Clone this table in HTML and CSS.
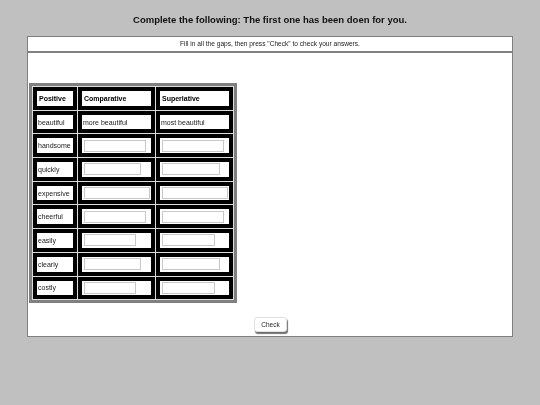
FILE: index.html
```html
<!DOCTYPE html>
<html>
<head>
<meta charset="utf-8">
<link rel="stylesheet" href="styles.css">
</head>
<body>
<h1 class="title">Complete the following: The first one has been doen for you.</h1>
<div class="box">
  <div class="instr">Fill in all the gaps, then press "Check" to check your answers.</div>
  <div class="content">
    <table class="grid">
      <tr>
        <td class="c1"><div class="cell head">Positive</div></td>
        <td class="c2"><div class="cell head">Comparative</div></td>
        <td class="c3"><div class="cell head">Superlative</div></td>
      </tr>
      <tr>
        <td class="c1"><div class="cell">beautiful</div></td>
        <td class="c2"><div class="cell">more beautiful</div></td>
        <td class="c3"><div class="cell">most beautiful</div></td>
      </tr>
      <tr>
        <td class="c1"><div class="cell">handsome</div></td>
        <td class="c2"><div class="cell"><input class="gap w62"></div></td>
        <td class="c3"><div class="cell"><input class="gap w62"></div></td>
      </tr>
      <tr>
        <td class="c1"><div class="cell">quickly</div></td>
        <td class="c2"><div class="cell"><input class="gap w57"></div></td>
        <td class="c3"><div class="cell"><input class="gap w58"></div></td>
      </tr>
      <tr>
        <td class="c1"><div class="cell">expensive</div></td>
        <td class="c2"><div class="cell"><input class="gap w66"></div></td>
        <td class="c3"><div class="cell"><input class="gap w68"></div></td>
      </tr>
      <tr>
        <td class="c1"><div class="cell">cheerful</div></td>
        <td class="c2"><div class="cell"><input class="gap w62"></div></td>
        <td class="c3"><div class="cell"><input class="gap w62"></div></td>
      </tr>
      <tr>
        <td class="c1"><div class="cell">easily</div></td>
        <td class="c2"><div class="cell"><input class="gap w52"></div></td>
        <td class="c3"><div class="cell"><input class="gap w53"></div></td>
      </tr>
      <tr>
        <td class="c1"><div class="cell">clearly</div></td>
        <td class="c2"><div class="cell"><input class="gap w57"></div></td>
        <td class="c3"><div class="cell"><input class="gap w58"></div></td>
      </tr>
      <tr>
        <td class="c1"><div class="cell">costly</div></td>
        <td class="c2"><div class="cell"><input class="gap w52"></div></td>
        <td class="c3"><div class="cell"><input class="gap w53"></div></td>
      </tr>
    </table>
    <div class="actions"><button class="check">Check</button></div>
  </div>
</div>
</body>
</html>
```
FILE: styles.css
```css
html, body {
  margin: 0;
  padding: 0;
  background: #c0c0c0;
  font-family: "Liberation Sans", Arial, sans-serif;
  color: #000;
}
body {
  will-change: transform;
}
.title {
  margin: 13px 0 9px;
  font-size: 9.5px;
  line-height: 14px;
  font-weight: bold;
  text-align: center;
  color: #111;
}
.box {
  margin: 0 27px;
  background: #fff;
  border: 1px solid #808080;
}
.instr {
  height: 14px;
  line-height: 14px;
  font-size: 6.6px;
  text-align: center;
  color: #222;
  border-bottom: 2px solid #808080;
}
.content {
  padding: 30px 0 4px 1px;
}
.grid {
  border-collapse: separate;
  border-spacing: 1px;
  background: #dcdcdc;
  border: 3px solid #808080;
}
.grid td {
  background: #000;
  padding: 4px;
  height: 14.7px;
}
.c1 { width: 36px; }
.c2 { width: 67px; }
.c3 { width: 68px; }
.cell {
  background: #fff;
  height: 14.7px;
  display: flex;
  align-items: center;
  font-size: 7px;
  padding: 0 1px;
  white-space: nowrap;
  color: #222;
}
.head {
  font-weight: bold;
  padding-left: 2px;
  color: #000;
}
.gap {
  box-sizing: border-box;
  height: 12px;
  margin: 0 0 0 1px;
  padding: 0;
  border: 1px solid #c8c8c8;
  background: #fff;
  font-size: 7px;
}
.w52 { width: 52px; }
.w53 { width: 53px; }
.w57 { width: 57px; }
.w58 { width: 58px; }
.w62 { width: 62px; }
.w66 { width: 66px; }
.w68 { width: 66px; }
.actions {
  display: flex;
  justify-content: center;
  padding-top: 14px;
}
.check {
  font-family: "Liberation Sans", Arial, sans-serif;
  font-size: 6.5px;
  height: 15px;
  padding: 0 6px;
  background: #fff;
  border: 1px solid #e0e0e0;
  border-radius: 3px;
  box-shadow: 1px 2px 1px #707070;
  color: #222;
}
```
